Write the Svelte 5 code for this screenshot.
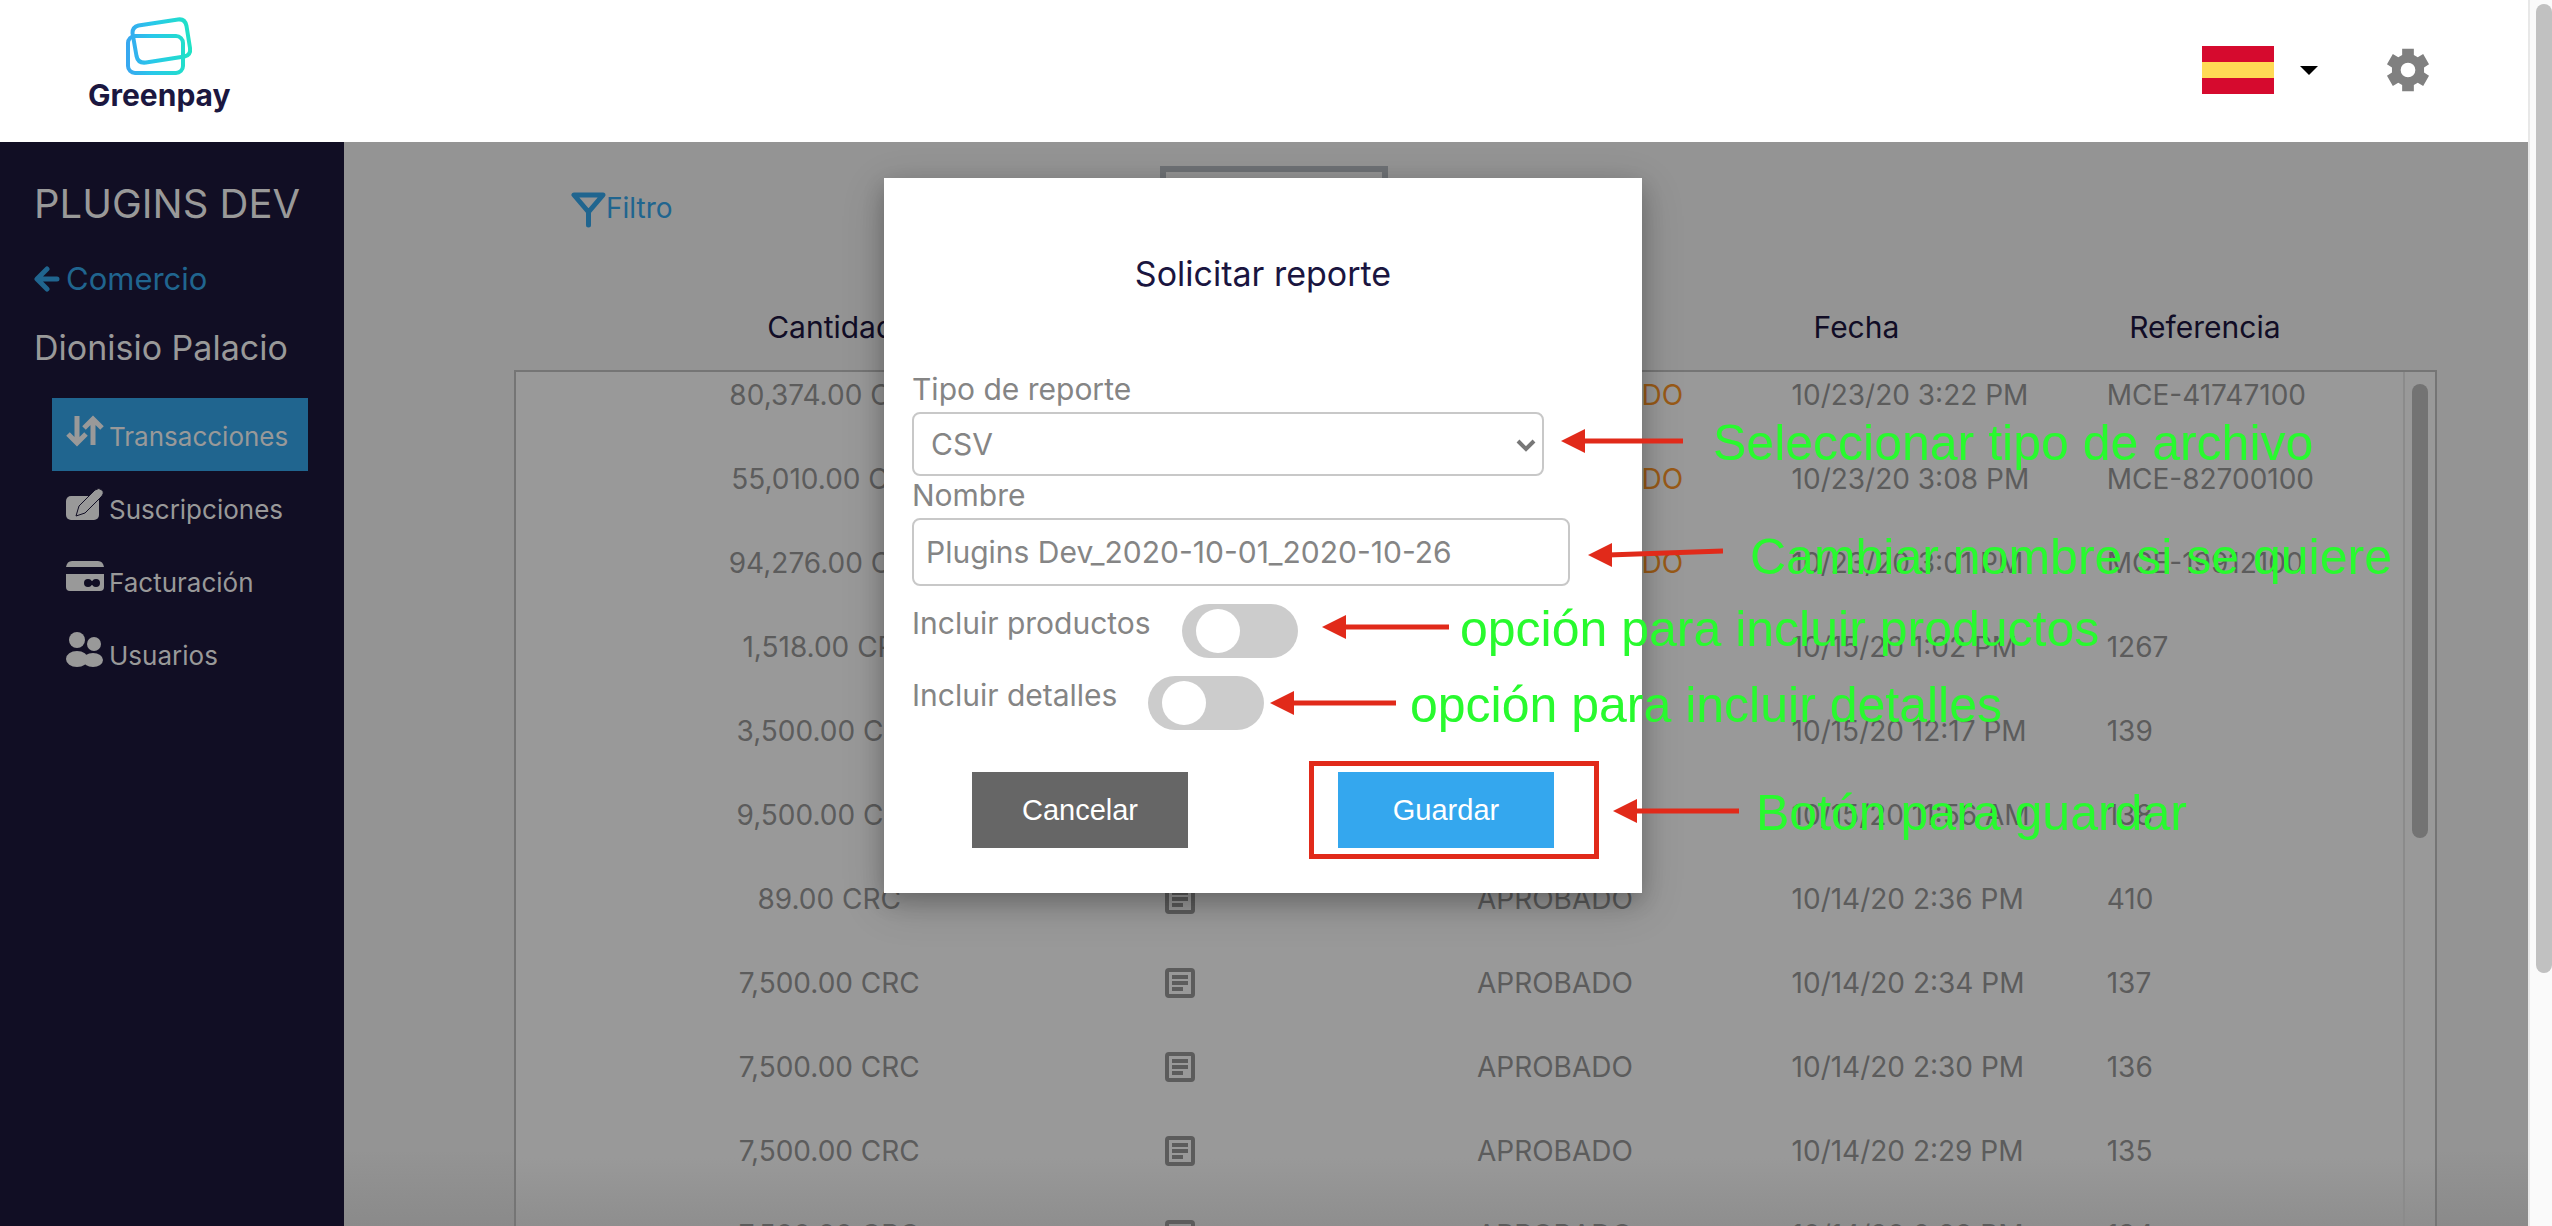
<script lang="ts">
	type Row = {
		amount: string;
		status: string;
		pending?: boolean;
		date: string;
		reference: string;
	};

	type Note = {
		text: string;
		x: number;
		y: number;
		length: number;
		gap: number;
		slope: number;
	};

	const rows: Row[] = [
		{ amount: '80,374.00 CRC', status: 'NO APROBADO', pending: true, date: '10/23/20 3:22 PM', reference: 'MCE-41747100' },
		{ amount: '55,010.00 CRC', status: 'NO APROBADO', pending: true, date: '10/23/20 3:08 PM', reference: 'MCE-82700100' },
		{ amount: '94,276.00 CRC', status: 'NO APROBADO', pending: true, date: '10/23/20 3:01 PM', reference: 'MCE-19912100' },
		{ amount: '1,518.00 CRC', status: 'APROBADO', date: '10/15/20 1:02 PM', reference: '1267' },
		{ amount: '3,500.00 CRC', status: 'APROBADO', date: '10/15/20 12:17 PM', reference: '139' },
		{ amount: '9,500.00 CRC', status: 'APROBADO', date: '10/15/20 11:56 AM', reference: '138' },
		{ amount: '89.00 CRC', status: 'APROBADO', date: '10/14/20 2:36 PM', reference: '410' },
		{ amount: '7,500.00 CRC', status: 'APROBADO', date: '10/14/20 2:34 PM', reference: '137' },
		{ amount: '7,500.00 CRC', status: 'APROBADO', date: '10/14/20 2:30 PM', reference: '136' },
		{ amount: '7,500.00 CRC', status: 'APROBADO', date: '10/14/20 2:29 PM', reference: '135' },
		{ amount: '7,500.00 CRC', status: 'APROBADO', date: '10/14/20 2:28 PM', reference: '134' }
	];

	// Positions are relative to the top left corner of the dialog
	const notes: Note[] = [
		{ text: 'Seleccionar tipo de archivo', x: 677, y: 235, length: 122, gap: 30, slope: 0 },
		{ text: 'Cambiar nombre si se quiere', x: 704, y: 349, length: 135, gap: 27, slope: -4 },
		{ text: 'opción para incluir productos', x: 438, y: 421, length: 127, gap: 11, slope: 0 },
		{ text: 'opción para incluir detalles', x: 386, y: 497, length: 126, gap: 14, slope: 0 },
		{ text: 'Botón para guardar', x: 729, y: 605, length: 126, gap: 17, slope: 0 }
	];

	let reportType = $state('CSV');
	let reportName = $state('Plugins Dev_2020-10-01_2020-10-26');
	let includeProducts = $state(false);
	let includeDetails = $state(false);
</script>

<div class="window">
	<div class="page">
		<header>
			<a class="logo" href="/">
				<svg width="70" height="62" viewBox="0 0 70 62" aria-hidden="true">
					<defs>
						<linearGradient id="brand" gradientUnits="userSpaceOnUse" x1="2" y1="0" x2="68" y2="0">
							<stop offset="0" stop-color="#38a6f0" />
							<stop offset="0.4" stop-color="#28c8ea" />
							<stop offset="1" stop-color="#20e3c4" />
						</linearGradient>
					</defs>
					<g fill="none" stroke="url(#brand)" stroke-width="4">
						<rect x="4" y="21" width="55" height="37" rx="7" />
						<path d="M14.500 10.500L54 4.500Q61 3.500 62.500 11L66 33Q67 40 60.500 41.500L22 47.500Q14 48.500 12.500 41L8.500 18Q8.500 12 14.500 10.500Z" />
					</g>
				</svg>
				<span>Greenpay</span>
			</a>
			<div class="tools">
				<button class="language" aria-label="Idioma">
					<span class="flag"></span>
					<span class="caret"></span>
				</button>
				<button class="settings" aria-label="Configuración">
					<svg width="52" height="54" viewBox="0 0 24 24" aria-hidden="true">
						<path
							fill="#808080"
							fill-rule="evenodd"
							d="M9.300 2.200h5.400v2.900l1.800 1 2.500-1.500 2.700 4.700-2.300 1.500v2.400l2.300 1.500-2.700 4.700-2.500-1.500-1.800 1v2.900H9.300v-2.900l-1.800-1L5 19.400l-2.700-4.700 2.300-1.500v-2.400L2.300 9.300 5 4.600l2.500 1.500 1.800-1zM12 8.600a3.400 3.400 0 1 0 0 6.800a3.400 3.400 0 1 0 0-6.800z"
						/>
					</svg>
				</button>
			</div>
		</header>

		<div class="body">
			<nav>
				<h1>PLUGINS DEV</h1>
				<a class="back" href="/comercio">
					<svg width="26" height="26" viewBox="0 0 26 26" aria-hidden="true">
						<path d="M13 3L3 13L13 23M4 13H23" fill="none" stroke="currentColor" stroke-width="5" stroke-linecap="round" stroke-linejoin="round" />
					</svg>
					Comercio
				</a>
				<h2>Dionisio Palacio</h2>
				<ul>
					<li>
						<a class="active" href="/transacciones">
							<svg width="38" height="38" viewBox="0 0 38 38" aria-hidden="true">
								<path d="M11 4V31M2 22L11 31L20 22M27 33V6M18 16L27 7L36 16" fill="none" stroke="currentColor" stroke-width="5" />
							</svg>
							<span>Transacciones</span>
						</a>
					</li>
					<li>
						<a href="/suscripciones">
							<svg width="38" height="38" viewBox="0 0 38 38" aria-hidden="true">
								<rect x="0" y="11" width="33" height="24" rx="5" fill="currentColor" />
								<path d="M10 31L13 21L29 5Q33 2 36 5Q39 8 35 12L19 28Z" fill="currentColor" stroke="#110e24" stroke-width="1" />
							</svg>
							<span>Suscripciones</span>
						</a>
					</li>
					<li>
						<a href="/facturacion">
							<svg width="38" height="38" viewBox="0 0 38 38" aria-hidden="true">
								<path d="M0 9Q1 3 6 3H32Q37 3 38 9ZM0 16H38V29Q38 33 34 33H4Q0 33 0 29Z" fill="currentColor" />
								<circle cx="22" cy="25" r="4" fill="#110e24" />
								<circle cx="30" cy="25" r="4" fill="#110e24" />
								<path d="M22 23H30V27H22Z" fill="#110e24" />
							</svg>
							<span>Facturación</span>
						</a>
					</li>
					<li>
						<a href="/usuarios">
							<svg width="38" height="38" viewBox="0 0 38 38" aria-hidden="true">
								<g fill="currentColor">
									<circle cx="11" cy="9" r="8" />
									<circle cx="28" cy="13" r="7" />
									<ellipse cx="11" cy="28" rx="11" ry="8" />
									<ellipse cx="27" cy="29" rx="10" ry="7" />
								</g>
							</svg>
							<span>Usuarios</span>
						</a>
					</li>
				</ul>
			</nav>

			<main>
				<div class="toolbar">
					<button class="filter">
						<svg width="35" height="36" viewBox="0 0 35 36" aria-hidden="true">
							<path d="M3 3H32L17.500 20Z M17.500 19V33" fill="none" stroke="currentColor" stroke-width="5" stroke-linecap="round" stroke-linejoin="round" />
						</svg>
						<span>Filtro</span>
					</button>
					<button class="report" aria-label="Solicitar reporte"></button>
				</div>

				<table class="head">
					<colgroup>
						<col class="amount" />
						<col class="receipt" />
						<col class="status" />
						<col class="date" />
						<col />
					</colgroup>
					<thead>
						<tr>
							<th class="center">Cantidad</th>
							<th></th>
							<th></th>
							<th>Fecha</th>
							<th>Referencia</th>
						</tr>
					</thead>
				</table>

				<div class="list">
					<table>
						<colgroup>
							<col class="amount" />
							<col class="receipt" />
							<col class="status" />
							<col class="date" />
							<col />
						</colgroup>
						<tbody>
							{#each rows as row}
								<tr>
									<td class="center">{row.amount}</td>
									<td class="center">
										<svg width="32" height="32" viewBox="0 0 32 32" aria-hidden="true">
											<rect x="3" y="3" width="26" height="26" rx="2" fill="none" stroke="currentColor" stroke-width="4" />
											<path d="M8 10H24M8 16H24M8 22H19" stroke="currentColor" stroke-width="4" />
										</svg>
									</td>
									<td class="status-cell" class:pending={row.pending}>{row.status}</td>
									<td>{row.date}</td>
									<td>{row.reference}</td>
								</tr>
							{/each}
						</tbody>
					</table>
					<div class="list-scroll"><span></span></div>
				</div>
			</main>
		</div>

		<div class="dialog" role="dialog" aria-labelledby="dialog-title">
			<h3 id="dialog-title">Solicitar reporte</h3>
			<form>
				<label for="type">Tipo de reporte</label>
				<div class="select">
					<select id="type" bind:value={reportType}>
						<option>CSV</option>
						<option>PDF</option>
					</select>
					<svg width="20" height="14" viewBox="0 0 20 14" aria-hidden="true">
						<path d="M2 3L10 11L18 3" fill="none" stroke="#777" stroke-width="4" />
					</svg>
				</div>
				<label for="name">Nombre</label>
				<input id="name" type="text" bind:value={reportName} />
				<div class="switch">
					<label for="products">Incluir productos</label>
					<input id="products" type="checkbox" bind:checked={includeProducts} />
				</div>
				<div class="switch">
					<label for="details">Incluir detalles</label>
					<input id="details" type="checkbox" bind:checked={includeDetails} />
				</div>
				<div class="actions">
					<button type="button" class="cancel">Cancelar</button>
					<div class="marked">
						<button type="button" class="save">Guardar</button>
					</div>
				</div>
			</form>

			{#each notes as note}
				<div class="note" style="left: {note.x}px; top: {note.y}px; gap: {note.gap}px">
					<svg width={note.length} height="56" aria-hidden="true">
						<path d="M20 28L{note.length} {28 + note.slope}" stroke="#e12a1a" stroke-width="5" />
						<path d="M0 28L24 16V40Z" fill="#e12a1a" />
					</svg>
					<span>{note.text}</span>
				</div>
			{/each}
		</div>
	</div>

	<div class="page-scroll"><span></span></div>
</div>

<style>
	:global(body) {
		margin: 0;
		overflow: hidden;
	}

	.window {
		display: flex;
		height: 100vh;
		font-family: Inter, 'Open Sans', sans-serif;
		font-size: 28px;
		line-height: 40px;
		overflow: hidden;
	}

	.page {
		position: relative;
		flex: 1;
		min-width: 0;
		display: flex;
		flex-direction: column;
	}

	button {
		font: inherit;
		border: none;
		padding: 0;
		background: none;
		cursor: pointer;
	}

	a {
		color: inherit;
		text-decoration: none;
	}

	/* Header */
	header {
		flex: none;
		box-sizing: border-box;
		height: 142px;
		padding: 0 94px 0 88px;
		display: flex;
		justify-content: space-between;
		align-items: center;
		background: #fff;
	}

	.logo {
		display: flex;
		flex-direction: column;
		align-items: center;
		padding-bottom: 14px;
		font-size: 30px;
		line-height: 36px;
		font-weight: 700;
		color: #1b1740;
	}

	.tools,
	.language {
		display: flex;
		align-items: center;
	}

	.tools {
		gap: 64px;
		padding-bottom: 2px;
	}

	.language {
		gap: 26px;
	}

	.flag {
		width: 72px;
		height: 48px;
		background: linear-gradient(#d60a2e 33.3%, #ffda55 33.3% 66.6%, #d60a2e 66.6%);
	}

	.caret {
		border: 9px solid transparent;
		border-top-color: #000;
		border-bottom: none;
	}

	.settings svg {
		display: block;
	}

	/* Sidebar */
	.body {
		flex: 1;
		min-height: 0;
		display: flex;
	}

	nav {
		flex: none;
		box-sizing: border-box;
		width: 344px;
		padding: 34px 34px 0;
		background: #110e24;
		color: #999;
	}

	h1,
	h2,
	h3 {
		margin: 0;
		font-weight: 400;
	}

	h1 {
		font-size: 40px;
		line-height: 56px;
		white-space: nowrap;
	}

	.back {
		display: flex;
		align-items: center;
		gap: 6px;
		margin-top: 27px;
		font-size: 31px;
		color: #20658f;
	}

	h2 {
		margin-top: 29px;
		font-size: 34px;
		white-space: nowrap;
	}

	ul {
		list-style: none;
		margin: 30px 2px 0 18px;
		padding: 0;
	}

	li a {
		display: flex;
		align-items: center;
		gap: 5px;
		height: 73px;
		padding: 0 14px;
		font-size: 26px;
	}

	li svg {
		flex: none;
		margin-bottom: 8px;
	}

	li span {
		padding-top: 4px;
	}

	.active {
		background: #20658f;
	}

	/* Transactions */
	main {
		flex: 1;
		min-width: 0;
		padding: 24px 91px 0 170px;
		display: flex;
		flex-direction: column;
		background: linear-gradient(#949494 93%, #8a8a8a);
	}

	.toolbar {
		display: flex;
		justify-content: space-between;
		height: 130px;
	}

	.filter {
		display: flex;
		align-items: center;
		height: 40px;
		margin: 24px 0 0 57px;
		color: #20658f;
	}

	.filter span {
		padding-bottom: 4px;
	}

	.report {
		width: 228px;
		height: 72px;
		margin-right: 1049px;
		border: 6px solid #6e7175;
		background: #949494;
	}

	table {
		flex: 1;
		border-collapse: collapse;
		table-layout: fixed;
		width: 100%;
		color: #5c5c5c;
	}

	.amount {
		width: 33.2%;
	}

	.receipt {
		width: 4%;
	}

	.status {
		width: 30.4%;
	}

	.date {
		width: 16.7%;
	}

	th,
	td {
		padding: 0;
		text-align: left;
		font-weight: 400;
		white-space: nowrap;
	}

	.center {
		text-align: center;
	}

	.head {
		flex: none;
		box-sizing: border-box;
		width: calc(100% - 33px);
		height: 74px;
		font-size: 30px;
		color: #110d26;
	}

	th {
		padding: 0 0 12px 22px;
	}

	th.center {
		padding-left: 6px;
	}

	.list {
		flex: 1;
		min-height: 0;
		display: flex;
		align-items: flex-start;
		border: 2px solid #757575;
		border-bottom: none;
		overflow: hidden;
		background: linear-gradient(#999 92%, #8e8e8e);
	}

	td {
		height: 84px;
		padding-bottom: 38px;
		box-sizing: border-box;
	}

	td svg {
		display: block;
		margin: 0 auto;
	}

	.status-cell {
		padding-left: 259px;
	}

	.pending {
		color: #985a17;
	}

	.list-scroll {
		flex: none;
		align-self: stretch;
		width: 16px;
		padding: 12px 7px;
		border-left: 2px solid #8b8b8b;
	}

	.list-scroll span,
	.page-scroll span {
		display: block;
		border-radius: 8px;
	}

	.list-scroll span {
		height: 454px;
		background: #737373;
	}

	.page-scroll {
		flex: none;
		width: 16px;
		padding: 4px 0 0 6px;
		border-left: 2px solid #e8e8e8;
		background: #fafafa;
	}

	.page-scroll span {
		height: 79vh;
		background: #c1c1c1;
	}

	/* Dialog */
	.dialog {
		position: absolute;
		top: 178px;
		left: 50%;
		width: 758px;
		margin-left: -380px;
		box-sizing: border-box;
		padding: 74px 28px 34px;
		background: #fff;
		color: #858585;
		box-shadow:
			0 8px 20px rgba(0, 0, 0, 0.2),
			0 12px 40px rgba(0, 0, 0, 0.19);
	}

	h3 {
		margin-bottom: 74px;
		font-size: 34px;
		line-height: 44px;
		text-align: center;
		color: #1a1540;
	}

	form {
		font-size: 30px;
	}

	form > label {
		display: block;
		height: 42px;
		line-height: 38px;
	}

	.select {
		position: relative;
		width: 632px;
	}

	.select svg {
		position: absolute;
		right: 8px;
		top: 26px;
		pointer-events: none;
	}

	select,
	input[type='text'] {
		display: block;
		box-sizing: border-box;
		width: 100%;
		height: 64px;
		padding: 0 17px;
		border: 2px solid #c8c8c8;
		border-radius: 8px;
		font: inherit;
		color: inherit;
		background: #fff;
		appearance: none;
	}

	input[type='text'] {
		width: 658px;
		height: 68px;
		padding: 0 12px;
	}

	.switch {
		display: flex;
		align-items: center;
		gap: 31px;
		height: 54px;
		margin-top: 18px;
	}

	.switch label {
		padding-bottom: 16px;
	}

	.switch input {
		appearance: none;
		display: flex;
		align-items: center;
		box-sizing: border-box;
		width: 116px;
		height: 54px;
		margin: 0;
		padding: 0 14px;
		border-radius: 27px;
		background: #ccc;
	}

	.switch input::before {
		content: '';
		width: 44px;
		height: 44px;
		border-radius: 50%;
		background: #fff;
	}

	.switch input:checked {
		justify-content: flex-end;
		background: #34a7ee;
	}

	.actions {
		display: flex;
		justify-content: space-between;
		align-items: center;
		margin-top: 31px;
		padding: 0 15px 0 60px;
	}

	.actions button {
		width: 216px;
		height: 76px;
		font-family: 'Liberation Sans', Arial, sans-serif;
		font-size: 29px;
		color: #fff;
	}

	.cancel {
		background: #666;
	}

	.marked {
		padding: 6px 40px 6px 24px;
		border: 5px solid #e12a1a;
	}

	.save {
		display: block;
		background: #34a7ee;
	}

	/* Help notes drawn over the page */
	.note {
		position: absolute;
		display: flex;
		align-items: center;
		height: 56px;
		font-family: 'Liberation Sans', Arial, sans-serif;
		font-size: 50px;
		line-height: 56px;
		color: #28fa2e;
		white-space: nowrap;
		pointer-events: none;
	}

	.note svg {
		flex: none;
	}

	.note span {
		padding-top: 3px;
	}
</style>
